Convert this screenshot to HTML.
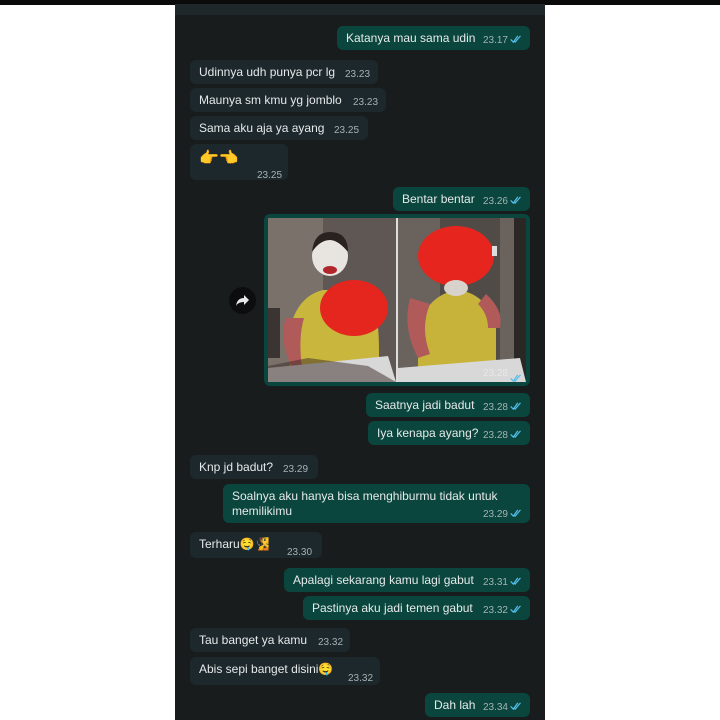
<!DOCTYPE html>
<html><head><meta charset="utf-8"><style>
*{margin:0;padding:0;box-sizing:border-box}
body{width:720px;height:720px;background:#fff;position:relative;overflow:hidden;font-family:"Liberation Sans","Noto Sans CJK JP",sans-serif}
.top{position:absolute;left:0;top:0;width:720px;height:5px;background:#0a0a0a}
.panel{position:absolute;left:175px;top:4px;width:370px;height:716px;background:#191c1d}
.hdr{position:absolute;left:175px;top:4px;width:370px;height:11px;background:#1e282b}
.b{position:absolute;height:24px;border-radius:6px;color:#e6e9ea;font-size:12px;line-height:24px;padding-left:9px;white-space:nowrap}
.o{background:#0a463d}
.i{background:#1d282d}
.t{position:absolute;right:8px;top:2px;font-size:10px;color:#a4b2b4}
.i .t{right:auto}
.o .t{right:22px}
.ck{position:absolute;right:7px;top:9px;width:14px;height:8px}
.img{position:absolute;left:264px;top:214px;width:266px;height:172px;background:#0a463d;border-radius:6px}
</style></head><body>
<div class="top"></div>
<div class="panel"></div>
<div class="hdr"></div>

<svg width="0" height="0" style="position:absolute"><defs><g id="c"><path d="M1 5 L4 8 L9 1 M5 7 L6 8 L12 1" stroke="#53bdeb" stroke-width="1.4" fill="none"/></g></defs></svg>

<div class="b o" style="left:337px;top:26px;width:193px">Katanya mau sama udin<span class="t" style="top:3px">23.17</span><svg class="ck" viewBox="0 0 14 9"><use href="#c"/></svg></div>

<div class="b i" style="left:190px;top:60px;width:188px">Udinnya udh punya pcr lg<span class="t" style="left:155px;top:3px">23.23</span></div>
<div class="b i" style="left:190px;top:88px;width:196px">Maunya sm kmu yg jomblo<span class="t" style="left:163px;top:3px">23.23</span></div>
<div class="b i" style="left:190px;top:116px;width:178px">Sama aku aja ya ayang<span class="t" style="left:144px;top:3px">23.25</span></div>
<div class="b i" style="left:190px;top:144px;width:98px;height:36px;font-size:16px;line-height:30px">👉👈<span class="t" style="left:67px;top:17px">23.25</span></div>

<div class="b o" style="left:393px;top:187px;width:137px">Bentar bentar<span class="t" style="top:3px">23.26</span><svg class="ck" viewBox="0 0 14 9"><use href="#c"/></svg></div>

<div class="img">
<svg style="position:absolute;left:4px;top:4px" width="258" height="164" viewBox="0 0 258 164">
<rect width="258" height="164" fill="#6d6460"/>
<rect x="0" y="0" width="128" height="164" fill="#7a716b"/>
<rect x="55" y="0" width="73" height="164" fill="#5e5753"/>
<rect x="130" y="0" width="128" height="164" fill="#6a625d"/>
<rect x="172" y="0" width="60" height="164" fill="#514b47"/>
<rect x="128" y="0" width="2" height="164" fill="#ddd"/>
<rect x="0" y="90" width="12" height="50" fill="#3a3432"/>
<path d="M22 164 L22 110 Q30 78 55 72 L95 72 Q115 80 110 164Z" fill="#c9b63c"/>
<path d="M18 100 Q10 120 24 150 L34 150 Q30 120 36 100Z" fill="#b05a5a"/>
<ellipse cx="62" cy="38" rx="18" ry="20" fill="#e8e4e0"/>
<path d="M44 34 Q46 14 62 14 Q80 14 80 34 Q70 22 62 22 Q52 22 44 34Z" fill="#2a2220"/>
<ellipse cx="62" cy="52" rx="7" ry="4" fill="#b0262b"/>
<ellipse cx="86" cy="90" rx="34" ry="28" fill="#e4261f"/>
<path d="M150 164 L150 110 Q160 76 190 72 Q220 76 228 110 L228 164Z" fill="#c7b33a"/>
<path d="M142 80 Q134 110 150 140 L162 136 Q152 110 162 86Z" fill="#b05a5a"/>
<path d="M218 76 Q236 92 232 110 L220 110 Q220 96 210 86Z" fill="#b05a5a"/>
<ellipse cx="188" cy="38" rx="38" ry="30" fill="#e6251e"/>
<ellipse cx="188" cy="70" rx="12" ry="8" fill="#d8d2cc"/>
<rect x="224" y="28" width="5" height="10" fill="#ddd"/>
<rect x="246" y="0" width="12" height="164" fill="#2b2725"/>
<path d="M0 150 L120 138 L128 164 L0 164Z" fill="#d8d8d8"/>
<path d="M130 164 L130 150 L252 140 L258 164Z" fill="#d8d8d8"/>
<path d="M0 164 L0 148 L40 140 L100 148 L128 164Z" fill="#3a2a28" opacity=".5"/>
</svg>
<span class="t" style="right:22px;top:154px;color:#e8e8e8">23.28</span><svg class="ck" style="top:160px" viewBox="0 0 14 9"><use href="#c"/></svg>
</div>
<div style="position:absolute;left:229px;top:287px;width:27px;height:27px;border-radius:50%;background:#0c0d0e"></div>
<svg style="position:absolute;left:235px;top:294px" width="15" height="13" viewBox="0 0 15 13"><path d="M9 1 L14 6 L9 11 L9 8 Q3 8 1 12 Q2 4 9 4Z" fill="#e8e8e8"/></svg>

<div class="b o" style="left:366px;top:393px;width:164px">Saatnya jadi badut<span class="t" style="top:3px">23.28</span><svg class="ck" viewBox="0 0 14 9"><use href="#c"/></svg></div>
<div class="b o" style="left:368px;top:421px;width:162px">Iya kenapa ayang?<span class="t" style="top:3px">23.28</span><svg class="ck" viewBox="0 0 14 9"><use href="#c"/></svg></div>

<div class="b i" style="left:190px;top:455px;width:128px">Knp jd badut?<span class="t" style="left:93px;top:3px">23.29</span></div>

<div class="b o" style="left:223px;top:484px;width:307px;height:39px;line-height:15px;padding-top:5px;white-space:normal;padding-right:10px">Soalnya aku hanya bisa menghiburmu tidak untuk memilikimu<span class="t" style="top:23px">23.29</span><svg class="ck" style="top:25px" viewBox="0 0 14 9"><use href="#c"/></svg></div>

<div class="b i" style="left:190px;top:532px;width:132px;height:26px">Terharu🤤🧏<span class="t" style="left:97px;top:9px">23.30</span></div>

<div class="b o" style="left:284px;top:568px;width:246px">Apalagi sekarang kamu lagi gabut<span class="t" style="top:3px">23.31</span><svg class="ck" viewBox="0 0 14 9"><use href="#c"/></svg></div>
<div class="b o" style="left:303px;top:596px;width:227px">Pastinya aku jadi temen gabut<span class="t" style="top:3px">23.32</span><svg class="ck" viewBox="0 0 14 9"><use href="#c"/></svg></div>

<div class="b i" style="left:190px;top:628px;width:160px">Tau banget ya kamu<span class="t" style="left:128px;top:3px">23.32</span></div>
<div class="b i" style="left:190px;top:657px;width:190px;height:28px">Abis sepi banget disini🤤<span class="t" style="left:158px;top:10px">23.32</span></div>

<div class="b o" style="left:425px;top:693px;width:105px">Dah lah<span class="t" style="top:3px">23.34</span><svg class="ck" viewBox="0 0 14 9"><use href="#c"/></svg></div>
</body></html>
